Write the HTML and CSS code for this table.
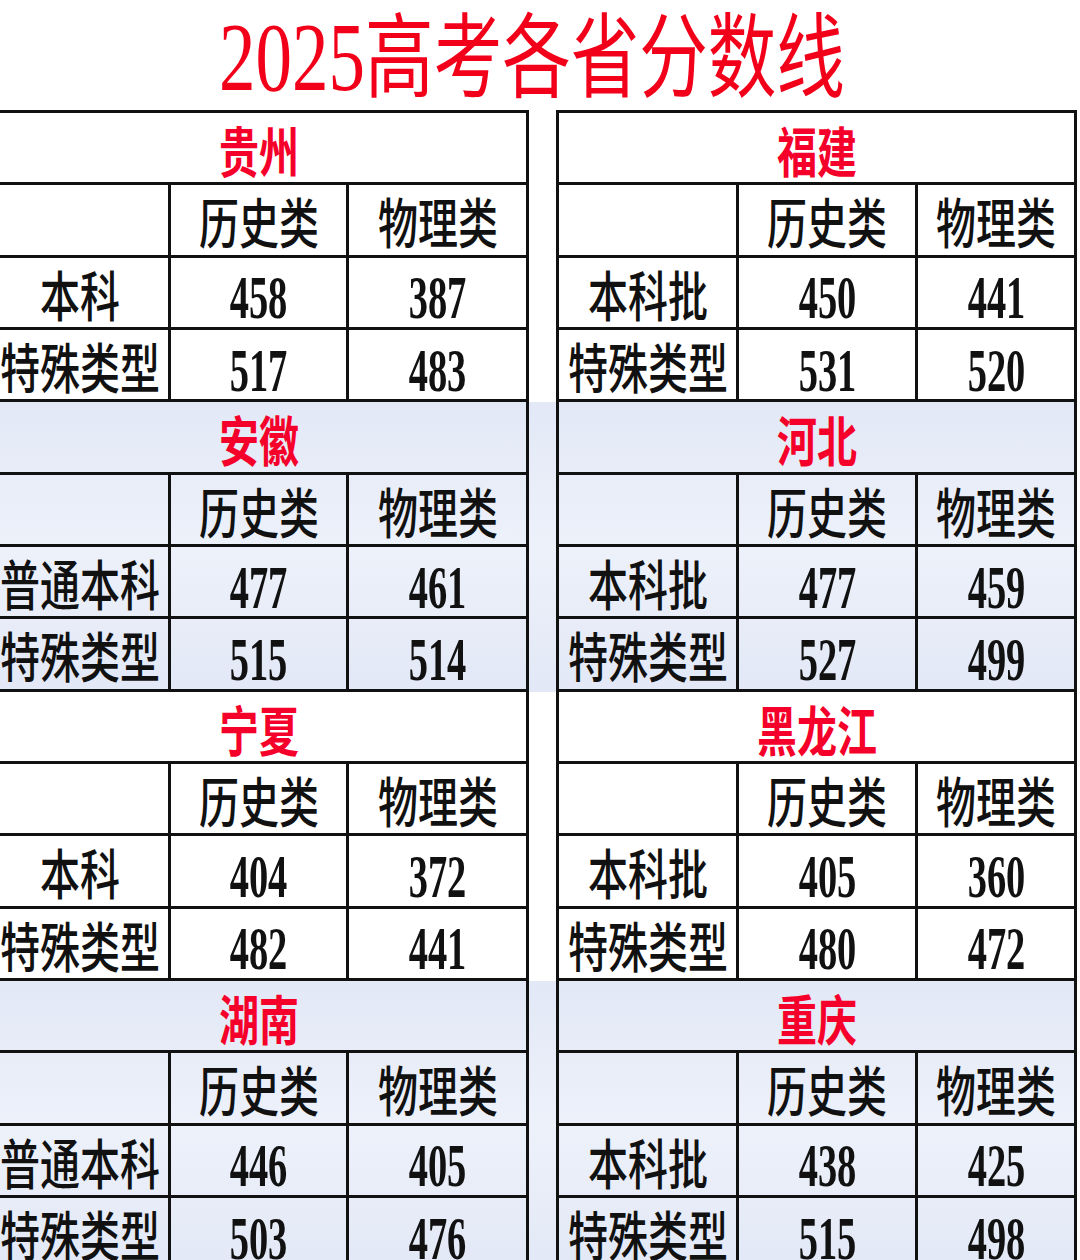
FILE: index.html
```html
<!DOCTYPE html>
<html lang="zh-CN">
<head>
<meta charset="utf-8">
<title>2025高考各省分数线</title>
<link rel="stylesheet" href="styles.css">
</head>
<body>
<div class="page">
  <h1 class="title"><span class="title-text"><span class="yr">2025</span>高考各省分数线</span></h1>

  <div class="band first">
    <div class="block left">
      <div class="cell prov"><span>贵州</span></div>
      <div class="cell"></div><div class="cell cn"><span>历史类</span></div><div class="cell cn"><span>物理类</span></div>
      <div class="cell cn"><span>本科</span></div><div class="cell num"><span>458</span></div><div class="cell num"><span>387</span></div>
      <div class="cell cn"><span>特殊类型</span></div><div class="cell num"><span>517</span></div><div class="cell num"><span>483</span></div>
    </div>
    <div class="block right">
      <div class="cell prov"><span>福建</span></div>
      <div class="cell"></div><div class="cell cn"><span>历史类</span></div><div class="cell cn"><span>物理类</span></div>
      <div class="cell cn"><span>本科批</span></div><div class="cell num"><span>450</span></div><div class="cell num"><span>441</span></div>
      <div class="cell cn"><span>特殊类型</span></div><div class="cell num"><span>531</span></div><div class="cell num"><span>520</span></div>
    </div>
  </div>

  <div class="band shade">
    <div class="block left">
      <div class="cell prov"><span>安徽</span></div>
      <div class="cell"></div><div class="cell cn"><span>历史类</span></div><div class="cell cn"><span>物理类</span></div>
      <div class="cell cn"><span>普通本科</span></div><div class="cell num"><span>477</span></div><div class="cell num"><span>461</span></div>
      <div class="cell cn"><span>特殊类型</span></div><div class="cell num"><span>515</span></div><div class="cell num"><span>514</span></div>
    </div>
    <div class="block right">
      <div class="cell prov"><span>河北</span></div>
      <div class="cell"></div><div class="cell cn"><span>历史类</span></div><div class="cell cn"><span>物理类</span></div>
      <div class="cell cn"><span>本科批</span></div><div class="cell num"><span>477</span></div><div class="cell num"><span>459</span></div>
      <div class="cell cn"><span>特殊类型</span></div><div class="cell num"><span>527</span></div><div class="cell num"><span>499</span></div>
    </div>
  </div>

  <div class="band">
    <div class="block left">
      <div class="cell prov"><span>宁夏</span></div>
      <div class="cell"></div><div class="cell cn"><span>历史类</span></div><div class="cell cn"><span>物理类</span></div>
      <div class="cell cn"><span>本科</span></div><div class="cell num"><span>404</span></div><div class="cell num"><span>372</span></div>
      <div class="cell cn"><span>特殊类型</span></div><div class="cell num"><span>482</span></div><div class="cell num"><span>441</span></div>
    </div>
    <div class="block right">
      <div class="cell prov"><span>黑龙江</span></div>
      <div class="cell"></div><div class="cell cn"><span>历史类</span></div><div class="cell cn"><span>物理类</span></div>
      <div class="cell cn"><span>本科批</span></div><div class="cell num"><span>405</span></div><div class="cell num"><span>360</span></div>
      <div class="cell cn"><span>特殊类型</span></div><div class="cell num"><span>480</span></div><div class="cell num"><span>472</span></div>
    </div>
  </div>

  <div class="band shade">
    <div class="block left">
      <div class="cell prov"><span>湖南</span></div>
      <div class="cell"></div><div class="cell cn"><span>历史类</span></div><div class="cell cn"><span>物理类</span></div>
      <div class="cell cn"><span>普通本科</span></div><div class="cell num"><span>446</span></div><div class="cell num"><span>405</span></div>
      <div class="cell cn"><span>特殊类型</span></div><div class="cell num"><span>503</span></div><div class="cell num"><span>476</span></div>
    </div>
    <div class="block right">
      <div class="cell prov"><span>重庆</span></div>
      <div class="cell"></div><div class="cell cn"><span>历史类</span></div><div class="cell cn"><span>物理类</span></div>
      <div class="cell cn"><span>本科批</span></div><div class="cell num"><span>438</span></div><div class="cell num"><span>425</span></div>
      <div class="cell cn"><span>特殊类型</span></div><div class="cell num"><span>515</span></div><div class="cell num"><span>498</span></div>
    </div>
  </div>
</div>
</body>
</html>
```

FILE: styles.css
```css
html, body {
  margin: 0;
  padding: 0;
  background: #ffffff;
}

body {
  width: 1080px;
  height: 1260px;
  overflow: hidden;
  font-family: "Noto Sans CJK SC", sans-serif;
  color: #111111;
}

.page {
  margin-left: -12px;
  width: 1089px;
}

.title {
  margin: 0;
  height: 110px;
  display: flex;
  justify-content: center;
  align-items: center;
  font-weight: 400;
  color: #f2001a;
  overflow: visible;
}

.title-text {
  display: inline-block;
  font-family: "Noto Sans CJK SC", sans-serif;
  font-size: 92px;
  line-height: 1;
  transform: scaleX(0.745);
  white-space: nowrap;
}

.yr {
  font-family: "Liberation Serif", serif;
  font-size: 98px;
}

.band {
  display: grid;
  grid-template-columns: 541px 521px;
  column-gap: 27px;
}

.band.shade {
  background: linear-gradient(to bottom, #e2e8f6, #edf1fa 50%, #e2e8f6);
}

.block {
  display: grid;
  grid-auto-rows: 72.33px;
  border-left: 3px solid #111111;
}

.band.first .block {
  border-top: 3px solid #111111;
}

.block.left {
  grid-template-columns: 180px 178px 180px;
}

.block.right {
  grid-template-columns: 180px 179px 159px;
}

.cell {
  box-sizing: border-box;
  border-right: 3px solid #111111;
  border-bottom: 3px solid #111111;
  display: flex;
  align-items: center;
  justify-content: center;
  white-space: nowrap;
}

.cell span {
  display: inline-block;
  line-height: 1;
}

.cn span {
  font-family: "Noto Sans CJK SC", sans-serif;
  font-size: 54px;
  font-weight: 500;
  transform: scaleX(0.74);
  padding-top: 3px;
}

.num span {
  font-family: "Liberation Serif", serif;
  font-size: 62px;
  font-weight: 700;
  transform: scaleX(0.62);
  padding-top: 10px;
}

.prov {
  grid-column: 1 / span 3;
}

.prov span {
  font-family: "Noto Sans CJK SC", sans-serif;
  font-size: 54px;
  font-weight: 700;
  color: #f5002a;
  transform: scaleX(0.74);
  padding-top: 5px;
}
```
